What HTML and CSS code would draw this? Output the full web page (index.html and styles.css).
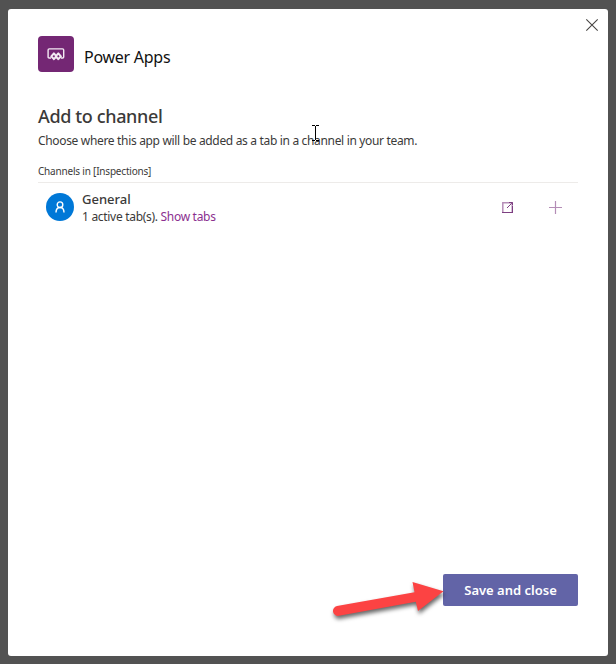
FILE: index.html
```html
<!DOCTYPE html>
<html lang="en">
<head>
<meta charset="utf-8">
<title>Power Apps</title>
<link rel="stylesheet" href="styles.css">
</head>
<body>
<main class="dialog">
  <button class="close" aria-label="Close"><svg width="14" height="14" viewBox="0 0 14 14"><path d="M1.3 1.3l11.4 11.4M12.7 1.3L1.3 12.7"/></svg></button>
  <header class="header">
    <div class="logo">
      <svg width="18" height="14" viewBox="0 0 18 14"><path d="M4 11H2.200Q1.100 11 1.100 10V3.100Q1.100 1.900 2.300 1.900H15.500Q16.700 1.900 16.700 3.100V10Q16.700 11 15.700 11H14"/><path class="gems" d="M6.900 6.400l2.600 2.900-2.600 2.900-2.600-2.900zM11.300 6.400l2.600 2.900-2.600 2.900-2.600-2.900z"/></svg>
    </div>
    <span class="app-name">Power Apps</span>
  </header>
  <h1 class="title">Add to channel</h1>
  <p class="description">Choose where this app will be added as a tab in a channel in your team.</p>
  <div class="label">Channels in [Inspections]</div>
  <section class="channel">
    <div class="avatar"><svg width="12" height="14" viewBox="0 0 12 14"><circle cx="6" cy="4.700" r="2.800"/><path d="M2 12.600C2 9.400 3.500 7.500 6 7.500S10 9.400 10 12.600"/></svg></div>
    <div class="info">
      <div class="name">General</div>
      <div class="tabs">1 active tab(s). <a class="link">Show tabs</a></div>
    </div>
    <div class="actions">
      <svg width="11" height="11" viewBox="0 0 11 11"><path class="faint" d="M.8 10V.8H10.200V10"/><path class="strong" d="M0 10.5H11M10.5 4V10M7 .5H10.5V3M5 6L9.800 1.200"/></svg>
      <svg class="plus" width="13" height="13" viewBox="0 0 13 13"><path d="M6.500 0V13M0 6.500H13"/></svg>
    </div>
  </section>
  <footer class="footer"><button class="save">Save and close</button></footer>
</main>
<svg class="cursor" width="9" height="18" viewBox="0 0 9 18"><path d="M1 1.5H4M5 1.5H8M4.5 2V16M1 16.5H4M5 16.5H8"/></svg>
<svg class="arrow" width="130" height="60" viewBox="0 0 130 60"><path d="M10 26L87.500 12.300L85.500 2L116.500 11.200L91 31L88.800 21.700L12 35.800A5 5 0 0 1 10 26Z"/></svg>
</body>
</html>
```
FILE: styles.css
```css
* { box-sizing: border-box; }
body {
  margin: 0;
  height: 664px;
  padding: 9px 8px 8px;
  overflow: hidden;
  background: #525252;
  color: #3b3a39;
  font-family: "Noto Sans", sans-serif;
}
button { border: 0; padding: 0; font-family: inherit; }
svg { display: block; fill: none; }
.dialog {
  position: relative;
  display: flex;
  flex-direction: column;
  height: 647px;
  padding: 27px 30px 50px;
  background: #fff;
  border-radius: 3px;
}
.close { position: absolute; top: 9px; right: 9px; background: none; }
.close svg { stroke: #484644; stroke-width: 1.1; }
.header { display: flex; height: 36px; gap: 10px; }
.logo {
  display: grid;
  place-items: center;
  width: 36px;
  height: 36px;
  border-radius: 4px;
  background: #742774;
}
.logo svg { stroke: #f3eaf3; stroke-width: 1.4; }
.logo .gems { stroke-width: 2; stroke-linejoin: round; }
.app-name {
  padding-top: 10px;
  color: #111;
  font-size: 16px;
  line-height: 22px;
  letter-spacing: -.27px;
}
.title {
  margin: 31px 0 0;
  font-size: 18px;
  line-height: 26px;
  font-weight: 500;
  letter-spacing: -.37px;
}
.description {
  margin: 3px 0 0;
  font-size: 12px;
  line-height: 18px;
  letter-spacing: -.33px;
  white-space: nowrap;
}
.label {
  height: 33px;
  padding-top: 14px;
  border-bottom: 1px solid #edebe9;
  font-size: 10px;
  line-height: 14px;
  letter-spacing: -.2px;
}
.channel { display: flex; height: 48px; padding: 7px 16px 0 8px; }
.avatar {
  display: grid;
  place-items: center;
  width: 28px;
  height: 28px;
  margin-top: 3px;
  border-radius: 50%;
  background: #0078d7;
}
.avatar svg { stroke: #fff; stroke-width: 1.4; }
.info { margin-left: 8px; }
.name { font-size: 13px; line-height: 18px; font-weight: 500; }
.tabs { font-size: 12px; line-height: 17px; letter-spacing: -.3px; }
.link { color: #8b2f8f; }
.actions { display: flex; gap: 36px; margin: 12px 0 0 auto; }
.actions .faint { stroke: #b68fb8; stroke-width: 1.5; }
.actions .strong { stroke: #7d3f81; }
.actions .plus { margin-top: -1px; stroke: #b48db6; stroke-width: 1.2; }
.footer { display: flex; justify-content: flex-end; margin-top: auto; }
.save {
  width: 135px;
  height: 32px;
  border-radius: 2px;
  background: #6264a7;
  color: #fff;
  font-size: 13px;
  font-weight: 600;
}
.cursor { position: absolute; left: 311px; top: 124px; stroke: #000; stroke-width: 1; }
.arrow {
  position: absolute;
  left: 327px;
  top: 580px;
  overflow: visible;
  fill: #fc4343;
  filter: drop-shadow(1px 3px 2px rgba(0, 0, 0, .6));
}
```
